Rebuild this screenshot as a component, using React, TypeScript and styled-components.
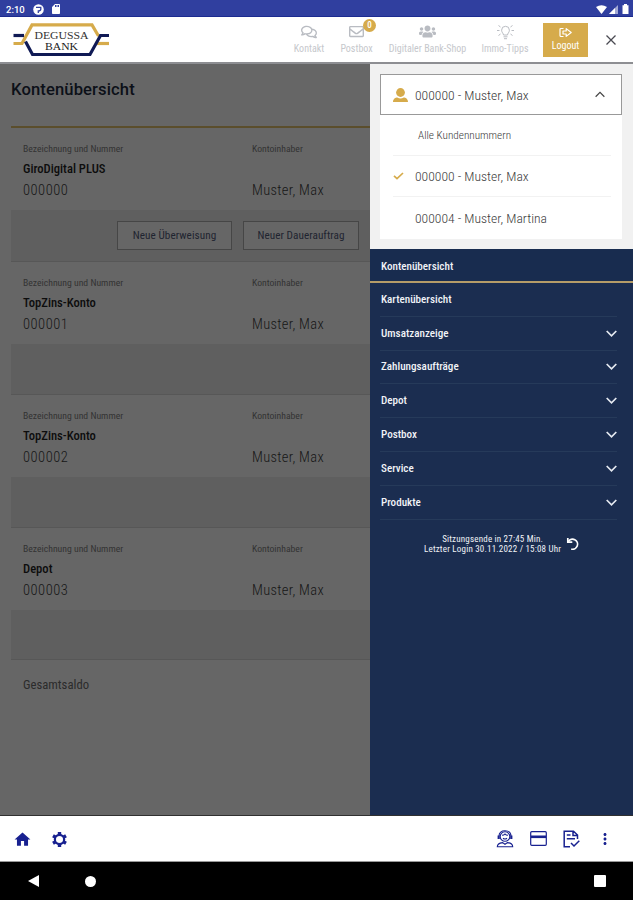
import React from "react";
import styled, { createGlobalStyle } from "styled-components";
import { FaRegComments, FaRegEnvelope, FaUsers } from "react-icons/fa";
import { MdHome, MdMoreVert, MdSdCard } from "react-icons/md";

const GlobalStyle = createGlobalStyle`
  * { box-sizing: border-box; }
  body { margin: 0; background: #000; font-family: Roboto, sans-serif; font-stretch: 75%; }
  svg { display: block; flex: none; }
`;

const navy = "#1b2d50";
const gold = "#d6ab4b";

const Screen = styled.div`
  display: flex;
  flex-direction: column;
  width: 633px;
  height: 900px;
  overflow: hidden;
  white-space: nowrap;
`;

const StatusBar = styled.div`
  height: 17px;
  flex: none;
  display: flex;
  align-items: center;
  padding: 2px 3px 0 6px;
  background: #303f9f;
  border-bottom: 1px solid #1c2b90;
  color: #fff;
`;

const Clock = styled.span`
  width: 27px;
  font-size: 9.5px;
  font-weight: 500;
  font-stretch: 100%;
`;

const StatusIcons = styled.div<{ $end?: boolean }>`
  display: flex;
  align-items: center;
  gap: ${(p) => (p.$end ? 2 : 6)}px;
  margin-left: ${(p) => (p.$end ? "auto" : 0)};
`;

const Header = styled.header`
  height: 47px;
  flex: none;
  display: flex;
  align-items: flex-start;
  padding: 6px 17px 0 13px;
  background: #fff;
  border-bottom: 2px solid #8d8e92;
`;

const HeaderNav = styled.nav`
  display: flex;
  align-items: flex-start;
  margin-left: auto;
`;

const HeaderItem = styled.div<{ $width: number; $gap: number }>`
  position: relative;
  display: flex;
  flex-direction: column;
  align-items: center;
  width: ${(p) => p.$width}px;
  margin-right: ${(p) => p.$gap}px;
  color: #b9bcc2;
  font-size: 10px;
  line-height: 14px;
`;

const IconSlot = styled.span`
  display: flex;
  align-items: center;
  justify-content: center;
  height: 17px;
`;

const HeaderLabel = styled.span`
  margin-top: 2px;
  color: #c6c8cc;
`;

const Badge = styled.span`
  position: absolute;
  left: 22px;
  top: -4px;
  width: 13px;
  height: 13px;
  border-radius: 50%;
  background: ${gold};
  color: #fff;
  font-size: 9px;
  font-weight: 500;
  line-height: 13px;
  text-align: center;
`;

const LogoutButton = styled.div`
  display: flex;
  flex-direction: column;
  align-items: center;
  gap: 1px;
  width: 45px;
  height: 34px;
  padding-top: 4px;
  margin-right: 18px;
  background: ${gold};
  color: #fff;
  font-size: 10px;
  line-height: 14px;
`;

const CloseSlot = styled.span`
  padding-top: 12px;
`;

const Body = styled.div`
  display: flex;
  height: 751px;
  flex: none;
`;

const Overview = styled.main`
  width: 370px;
  flex: none;
  padding-left: 11px;
  background: #666;
  color: #1e1e1e;
`;

const PageTitle = styled.h1`
  height: 64px;
  margin: 0;
  padding-top: 16px;
  border-bottom: 2px solid #5b4e2c;
  color: #0c1018;
  font-size: 16.6px;
  font-weight: 500;
  font-stretch: 98%;
  letter-spacing: 0.12px;
  line-height: 20px;
`;

const AccountBody = styled.div`
  display: grid;
  grid-template-columns: 229px 1fr;
  grid-template-rows: 18px 22px 22px;
  height: 82px;
  padding: 11px 0 0 12px;
`;

const FieldLabel = styled.span`
  color: #333;
  font-size: 9.7px;
  line-height: 20px;
`;

const AccountName = styled.span`
  grid-column: 1 / 3;
  color: #0d0d0d;
  font-size: 12.6px;
  font-weight: 500;
  line-height: 23px;
`;

const AccountValue = styled.span<{ $spacing: number }>`
  color: #161616;
  font-size: 14.5px;
  font-weight: 350;
  line-height: 24px;
  letter-spacing: ${(p) => p.$spacing}px;
`;

const AccountFooter = styled.div<{ $height: number }>`
  display: flex;
  align-items: flex-start;
  justify-content: flex-end;
  gap: 11px;
  height: ${(p) => p.$height}px;
  padding: 11px 11px 0 0;
  background: #5f5f5f;
  border-bottom: 1px solid #575757;
`;

const ActionButton = styled.div<{ $width: number }>`
  width: ${(p) => p.$width}px;
  height: 29px;
  border: 1px solid #464646;
  background: #666;
  color: #1f2430;
  font-size: 11.2px;
  line-height: 28px;
  letter-spacing: 0.06px;
  text-align: center;
`;

const Total = styled.div`
  padding: 14px 0 0 12px;
  color: #2b2b2b;
  font-size: 12.7px;
  line-height: 22px;
`;

const Drawer = styled.aside`
  width: 263px;
  background: ${navy};
  color: #f1f3f7;
`;

const CustomerPanel = styled.div`
  height: 185px;
  padding: 10px 11px 0 10px;
  background: #f1f1f1;
`;

const CustomerSelect = styled.div`
  display: flex;
  align-items: center;
  height: 41px;
  padding: 0 16px 0 12px;
  border: 1px solid #999;
  background: #fff;
  color: #383838;
  font-size: 13.6px;
  font-weight: 350;

  & > svg:last-child { margin-left: auto; }
`;

const IconColumn = styled.span`
  display: flex;
  width: 22px;
  flex: none;
`;

const CustomerList = styled.div`
  height: 124px;
  padding: 0 11px 0 13px;
  background: #fff;
  color: #3c3c3c;
`;

const CustomerOption = styled.div<{ $height: number; $small?: boolean }>`
  display: flex;
  align-items: center;
  height: ${(p) => p.$height}px;
  padding-left: ${(p) => (p.$small ? 3 : 0)}px;
  border-bottom: 1px solid #f2f2f2;
  font-size: ${(p) => (p.$small ? 11.2 : 13.6)}px;
  font-weight: 350;

  &:last-child { border-bottom: 0; }
`;

const MenuItem = styled.div<{ $current?: boolean }>`
  display: flex;
  align-items: center;
  justify-content: space-between;
  height: ${(p) => (p.$current ? 34 : 33.8)}px;
  margin: ${(p) => (p.$current ? "0" : "0 16px 0 10px")};
  padding: ${(p) => (p.$current ? "2px 16px 0 11px" : "0 0 0 1px")};
  background: ${(p) => (p.$current ? "#182c4f" : "transparent")};
  border-bottom: ${(p) => (p.$current ? "2px solid #b59c68" : "1px solid #263a5a")};
  font-size: 11.1px;
  font-weight: 500;
`;

const Session = styled.div`
  display: flex;
  align-items: center;
  gap: 5px;
  margin: 14px 0 0 54px;
  font-size: 9px;
  line-height: 10px;
  letter-spacing: 0.19px;
  text-align: center;
`;

const Toolbar = styled.div`
  display: flex;
  align-items: center;
  height: 47px;
  flex: none;
  padding: 0 19px 0 13px;
  background: #fff;
  border-top: 1px solid #303030;
  border-bottom: 1px solid #999;
  color: #182190;
`;

const ToolGroup = styled.div<{ $gap: number; $end?: boolean }>`
  display: flex;
  align-items: center;
  gap: ${(p) => p.$gap}px;
  padding-top: ${(p) => (p.$end ? 0 : 2)}px;
  margin-left: ${(p) => (p.$end ? "auto" : 0)};
`;

const SystemNav = styled.div`
  display: flex;
  align-items: center;
  flex: 1;
  padding: 0 27px 0 28px;
  background: #000;

  & > svg:nth-child(2) { margin-left: 46px; }
  & > svg:last-child { margin-left: auto; }
`;

const LogoSvg = styled.svg`
  font-family: "Liberation Serif", serif;
`;

const Logo = () => (
  <LogoSvg width="97" height="35" viewBox="0 0 97 35" fill="none">
    <path d="M.5 20.500H9L19 1.900H79L85.500 13" stroke={gold} strokeWidth="3.200" />
    <path d="M82 20.500H96" stroke={gold} strokeWidth="3.200" />
    <path d="M.5 12.500H11" stroke="#101a55" strokeWidth="3.200" />
    <path d="M12.500 18.500L19.500 31.500H77L87.500 12.500H96" stroke="#101a55" strokeWidth="3.200" />
    <text x="48.500" y="15.500" fontSize="10.500" fill="#333" textAnchor="middle" textLength="54" lengthAdjust="spacingAndGlyphs">DEGUSSA</text>
    <text x="48.500" y="27.300" fontSize="10.500" fill="#222" textAnchor="middle" textLength="33" lengthAdjust="spacingAndGlyphs">BANK</text>
  </LogoSvg>
);

const BulbIcon = () => (
  <svg width="19" height="16" viewBox="0 0 19 16" fill="none" stroke="currentColor" strokeWidth="1">
    <path d="M7.500 11C7.500 9.400 5.600 8.500 5.600 6.200A3.900 3.900 0 0 1 13.400 6.200C13.400 8.500 11.500 9.400 11.500 11Z" />
    <path d="M7.500 12.800H11.500M8 14.700H11M1 6.500H3.500M15.500 6.500H18M2.500 1.500L4.500 3M16.500 1.500L14.500 3M2.500 11.500L4.500 10M16.500 11.500L14.500 10" />
  </svg>
);

const LogoutIcon = () => (
  <svg width="13" height="11" viewBox="0 0 13 11" fill="none" stroke="currentColor" strokeWidth="1.200" strokeLinejoin="round">
    <path d="M4.500 1.500H2Q1 1.500 1 2.500V8.500Q1 9.500 2 9.500H4.500" />
    <path d="M4 4H7.200V1.600L12.200 5.500L7.200 9.400V7H4Z" />
  </svg>
);

const CloseIcon = () => (
  <svg width="10" height="10" viewBox="0 0 10 10" stroke="#4a4a52" strokeWidth="1.300">
    <path d="M.5.500L9.500 9.500M9.500.500L.500 9.500" />
  </svg>
);

const PersonIcon = () => (
  <svg width="15" height="14" viewBox="0 0 15 14" fill={gold}>
    <circle cx="7.500" cy="4.500" r="4.400" />
    <path d="M0 14C0 10.700 2.500 9.600 4.300 9.500Q7.500 11.300 10.700 9.500C12.500 9.600 15 10.700 15 14Z" />
  </svg>
);

const CheckIcon = () => (
  <svg width="11" height="8" viewBox="0 0 11 8" fill="none" stroke={gold} strokeWidth="1.700">
    <path d="M1 3.800L4 6.600L10 1" />
  </svg>
);

const Chevron = ({ up }: { up?: boolean }) => (
  <svg width={up ? 10 : 11} height="7" viewBox="0 0 11 7" fill="none" stroke={up ? "#444" : "#e6eaf1"} strokeWidth={up ? 1.300 : 1.700}>
    <path d={up ? "M.7 6L5.500 1.200L10.300 6" : "M.7 1L5.500 5.800L10.300 1"} />
  </svg>
);

const ReloadIcon = () => (
  <svg width="14" height="14" viewBox="0 0 14 14" fill="none" stroke="#fff" strokeWidth="1.700">
    <path d="M2.300 4.600A5 5 0 1 1 5.200 12" />
    <path d="M1.800 1V5.200H6.300" />
  </svg>
);

const GearIcon = () => (
  <svg width="17" height="17" viewBox="0 0 18 18" fill="none" stroke="currentColor">
    <circle cx="9" cy="9" r="4.800" strokeWidth="2.600" />
    <path d="M9 4.500V1M9 13.500V17M5.100 6.750L2.100 5M12.900 11.250L15.900 13M5.100 11.250L2.100 13M12.900 6.750L15.900 5" strokeWidth="3.600" />
    <circle cx="9" cy="9" r="3.500" fill="#fff" stroke="none" />
  </svg>
);

const AdvisorIcon = () => (
  <svg width="18" height="18" viewBox="0 0 18 18" fill="none" stroke="currentColor" strokeWidth="1.100">
    <circle cx="9" cy="6.500" r="4.800" />
    <path d="M3 6C3 2.500 5.500 .8 9 .8S15 2.500 15 6M6 5.300Q8 5.300 9 4Q10 5.300 12 5.300M7 8.300Q9 9.800 11 8.300" />
    <path d="M2.700 5.500V9M15.300 5.500V9" strokeWidth="2.200" />
    <path d="M6.500 12.600C3.500 12.900 1.300 13.800 1.300 16.800H16.700C16.700 13.800 14.500 12.900 11.500 12.600L9 14.300Z" />
  </svg>
);

const CardIcon = () => (
  <svg width="17" height="15" viewBox="0 0 17 15" fill="none" stroke="currentColor">
    <rect x=".7" y=".7" width="15.600" height="13.600" rx="1" strokeWidth="1.200" />
    <path d="M1 5.800H16" strokeWidth="2.600" />
  </svg>
);

const OrderIcon = () => (
  <svg width="17" height="18" viewBox="0 0 17 18" fill="none" stroke="currentColor" strokeWidth="1.500">
    <path d="M7 16.800H1.200V1.200H10.500L14.500 5V9M10 1.200V5.500H14.500M3.800 5H7.500M3.800 8.700H12" />
    <path d="M8 13L11 16L16.300 10.700" />
  </svg>
);

const accounts = [
  { name: "GiroDigital PLUS", number: "000000", footer: 52, actions: true },
  { name: "TopZins-Konto", number: "000001", footer: 51 },
  { name: "TopZins-Konto", number: "000002", footer: 51 },
  { name: "Depot", number: "000003", footer: 50 },
];

const menu = ["Umsatzanzeige", "Zahlungsaufträge", "Depot", "Postbox", "Service", "Produkte"];

export default function App() {
  return (
    <Screen>
      <GlobalStyle />
      <StatusBar>
        <Clock>2:10</Clock>
        <StatusIcons>
          <svg width="11" height="11" viewBox="0 0 11 11">
            <circle cx="5.500" cy="5.500" r="5.300" fill="#fff" />
            <path d="M3 3.300H7.800V5.300Q7.800 7 5.300 7V9" fill="none" stroke="#303f9f" strokeWidth="1.300" />
          </svg>
          <MdSdCard size={12} />
        </StatusIcons>
        <StatusIcons $end>
          <svg width="11" height="9" viewBox="0 0 11 9" fill="#fff"><path d="M0 2Q5.500-1.500 11 2L5.500 9Z" /></svg>
          <svg width="10" height="9" viewBox="0 0 10 9" fill="#fff"><path d="M0 9L9 0V9Z" opacity=".55" /><path d="M0 9L6 3V9Z" /></svg>
          <svg width="9" height="10" viewBox="0 0 9 10" fill="#fff"><path d="M1.500 1.200H3V0H6V1.200H7.500V10H1.500Z" /></svg>
        </StatusIcons>
      </StatusBar>

      <Header>
        <Logo />
        <HeaderNav>
          <HeaderItem $width={30} $gap={17}>
            <IconSlot><FaRegComments size={16} /></IconSlot>
            <HeaderLabel>Kontakt</HeaderLabel>
          </HeaderItem>
          <HeaderItem $width={31} $gap={17}>
            <IconSlot><FaRegEnvelope size={15} /></IconSlot>
            <HeaderLabel>Postbox</HeaderLabel>
            <Badge>0</Badge>
          </HeaderItem>
          <HeaderItem $width={77} $gap={16}>
            <IconSlot><FaUsers size={17} /></IconSlot>
            <HeaderLabel>Digitaler Bank-Shop</HeaderLabel>
          </HeaderItem>
          <HeaderItem $width={46} $gap={15}>
            <IconSlot><BulbIcon /></IconSlot>
            <HeaderLabel>Immo-Tipps</HeaderLabel>
          </HeaderItem>
          <LogoutButton>
            <LogoutIcon />
            <span>Logout</span>
          </LogoutButton>
          <CloseSlot><CloseIcon /></CloseSlot>
        </HeaderNav>
      </Header>

      <Body>
        <Overview>
          <PageTitle>Kontenübersicht</PageTitle>
          {accounts.map((account) => (
            <section key={account.number}>
              <AccountBody>
                <FieldLabel>Bezeichnung und Nummer</FieldLabel>
                <FieldLabel>Kontoinhaber</FieldLabel>
                <AccountName>{account.name}</AccountName>
                <AccountValue $spacing={0.5}>{account.number}</AccountValue>
                <AccountValue $spacing={0.3}>Muster, Max</AccountValue>
              </AccountBody>
              <AccountFooter $height={account.footer}>
                {account.actions && (
                  <>
                    <ActionButton $width={115}>Neue Überweisung</ActionButton>
                    <ActionButton $width={116}>Neuer Dauerauftrag</ActionButton>
                  </>
                )}
              </AccountFooter>
            </section>
          ))}
          <Total>Gesamtsaldo</Total>
        </Overview>

        <Drawer>
          <CustomerPanel>
            <CustomerSelect>
              <IconColumn><PersonIcon /></IconColumn>
              <span>000000 - Muster, Max</span>
              <Chevron up />
            </CustomerSelect>
            <CustomerList>
              <CustomerOption $height={41} $small>
                <IconColumn />
                <span>Alle Kundennummern</span>
              </CustomerOption>
              <CustomerOption $height={41}>
                <IconColumn><CheckIcon /></IconColumn>
                <span>000000 - Muster, Max</span>
              </CustomerOption>
              <CustomerOption $height={42}>
                <IconColumn />
                <span>000004 - Muster, Martina</span>
              </CustomerOption>
            </CustomerList>
          </CustomerPanel>
          <MenuItem $current>Kontenübersicht</MenuItem>
          <MenuItem>Kartenübersicht</MenuItem>
          {menu.map((label) => (
            <MenuItem key={label}>
              <span>{label}</span>
              <Chevron />
            </MenuItem>
          ))}
          <Session>
            <div>
              <div>Sitzungsende in 27:45 Min.</div>
              <div>Letzter Login 30.11.2022 / 15:08 Uhr</div>
            </div>
            <ReloadIcon />
          </Session>
        </Drawer>
      </Body>

      <Toolbar>
        <ToolGroup $gap={19}>
          <MdHome size={19} />
          <GearIcon />
        </ToolGroup>
        <ToolGroup $gap={16} $end>
          <AdvisorIcon />
          <CardIcon />
          <OrderIcon />
          <MdMoreVert size={18} />
        </ToolGroup>
      </Toolbar>
      <SystemNav>
        <svg width="11" height="12" viewBox="0 0 11 12" fill="#fff"><path d="M0 6L11 0V12Z" /></svg>
        <svg width="11" height="11" viewBox="0 0 11 11" fill="#fff"><circle cx="5.500" cy="5.500" r="5.500" /></svg>
        <svg width="12" height="12" viewBox="0 0 12 12" fill="#fff"><rect width="12" height="12" rx="1" /></svg>
      </SystemNav>
    </Screen>
  );
}
